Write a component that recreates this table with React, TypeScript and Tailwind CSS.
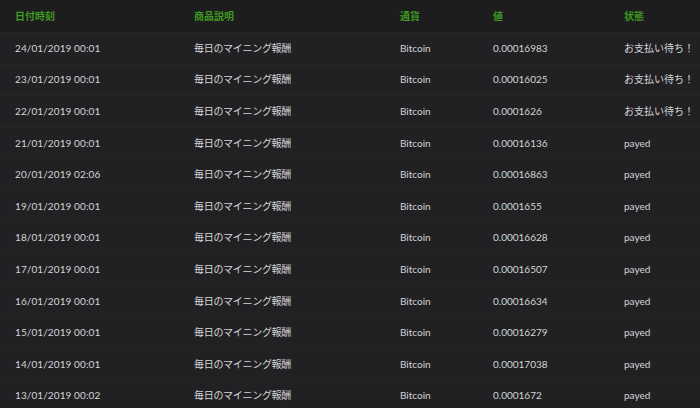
import React from "react";

const rows = [
  ["24/01/2019 00:01", "0.00016983", "お支払い待ち！"],
  ["23/01/2019 00:01", "0.00016025", "お支払い待ち！"],
  ["22/01/2019 00:01", "0.0001626", "お支払い待ち！"],
  ["21/01/2019 00:01", "0.00016136", "payed"],
  ["20/01/2019 02:06", "0.00016863", "payed"],
  ["19/01/2019 00:01", "0.0001655", "payed"],
  ["18/01/2019 00:01", "0.00016628", "payed"],
  ["17/01/2019 00:01", "0.00016507", "payed"],
  ["16/01/2019 00:01", "0.00016634", "payed"],
  ["15/01/2019 00:01", "0.00016279", "payed"],
  ["14/01/2019 00:01", "0.00017038", "payed"],
  ["13/01/2019 00:02", "0.0001672", "payed"],
];

const font = { fontFamily: "Lato, 'Noto Sans CJK JP', sans-serif" };

export default function App() {
  return (
    <div className="w-[700px] h-[408px] overflow-hidden bg-[#202023]" style={font}>
      <div className="flex items-center h-[33px] bg-[#1d1d20] text-[10px] font-bold text-[#3f9a1f] border-b border-[#262629]">
        <div className="w-[194px] pl-[15px]">日付時刻</div>
        <div className="w-[206px]">商品説明</div>
        <div className="w-[93px]">通貨</div>
        <div className="w-[131px]">値</div>
        <div className="flex-1">状態</div>
      </div>
      {rows.map((r, i) => (
        <div
          key={i}
          className="flex items-center h-[31.6px] text-[10px] text-[#d4d4d4] border-b border-[#262629] bg-[#212124]"
        >
          <div className="w-[194px] pl-[15px] tracking-[0.1px]">{r[0]}</div>
          <div className="w-[206px] tracking-[-0.3px]">毎日のマイニング報酬</div>
          <div className="w-[93px]">Bitcoin</div>
          <div className="w-[131px]">{r[1]}</div>
          <div className="flex-1">{r[2]}</div>
        </div>
      ))}
    </div>
  );
}
